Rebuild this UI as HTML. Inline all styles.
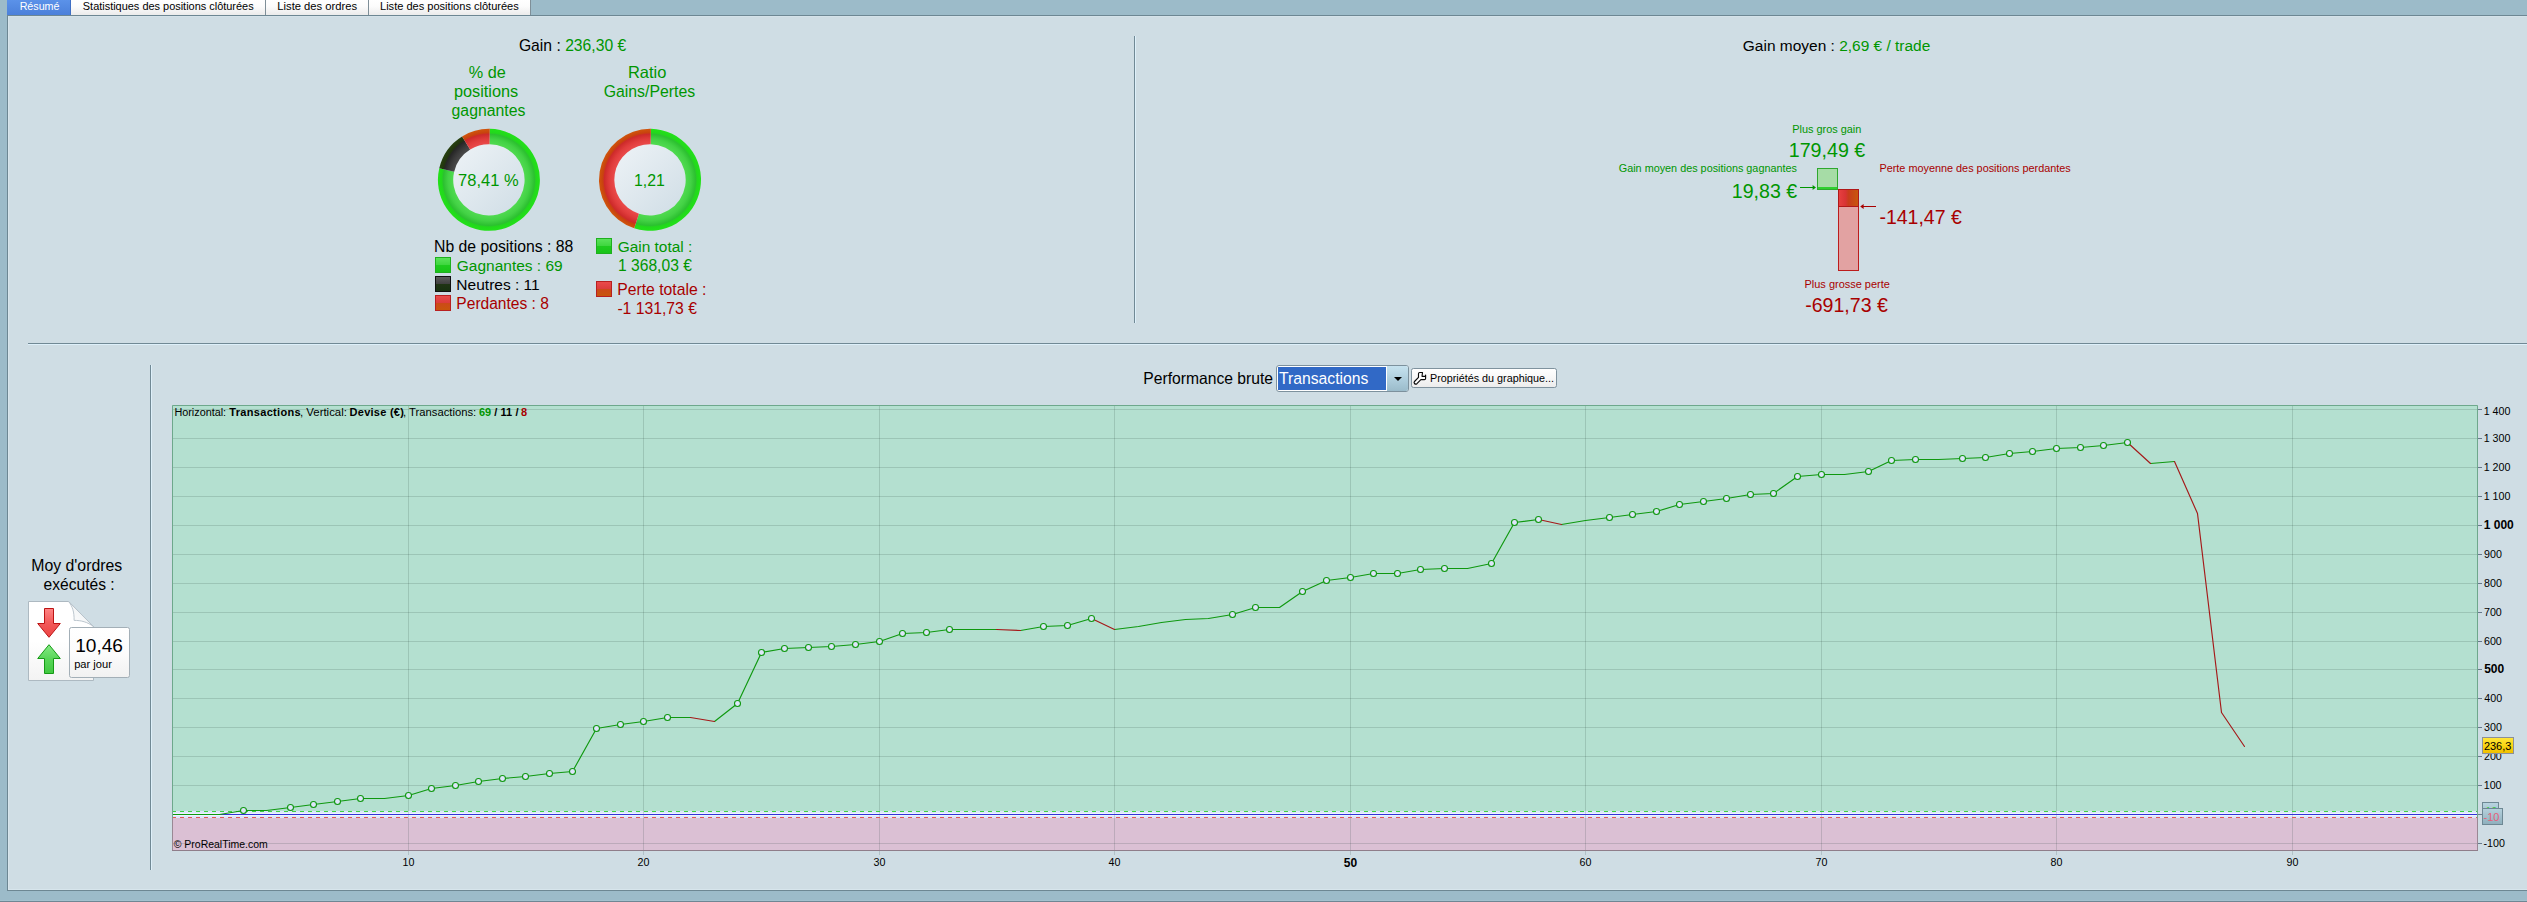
<!DOCTYPE html>
<html lang="fr"><head><meta charset="utf-8"><title>Résumé</title>
<style>
html,body{margin:0;padding:0}
body{width:2527px;height:902px;overflow:hidden;position:relative;background:#9cbbc9;font-family:"Liberation Sans",sans-serif}
#panel{position:absolute;left:7px;top:15px;width:2520px;height:876px;background:#cfdde4;border-left:1px solid #6d8793;border-top:1px solid #6d8793;border-bottom:1px solid #6d8793;box-sizing:border-box;box-shadow:inset 1px 0 0 #d7e5ec, inset 0 -1px 0 #d7e5ec, inset 0 1px 0 #d4e2e9}
#bottombar{position:absolute;left:0;top:900px;width:2527px;height:2px;background:linear-gradient(#a3c1ce 50%,#6f8794 50%)}
.t{position:absolute;white-space:nowrap;line-height:20px;height:20px}
.tab{position:absolute;top:0;height:15px;box-sizing:border-box;background:linear-gradient(#ffffff,#fbfbfb 45%,#ebebeb);border-right:1px solid #7f8f98}
.tab.sel{background:linear-gradient(#5b92e9,#4b80da);border-right:1px solid #3f6fc4}
.sq{position:absolute;width:16px;height:16px;box-sizing:border-box}
.sq.g{background:linear-gradient(#5ae25a,#3fd63f 48%,#1fcb1f 52%,#19c419);border:1px solid #1eb01e}
.sq.k{background:linear-gradient(#5a5a5a,#404040 48%,#1f3414 52%,#173010);border:1px solid #101010}
.sq.r{background:linear-gradient(#ea4a4a,#dc3c3c 48%,#cc4a18 52%,#c8560c);border:1px solid #b82020}
.vsep{position:absolute;width:1px;background:#718995;box-shadow:1px 0 0 #def0fa}
.hsep{position:absolute;height:1px;background:#718995;box-shadow:0 1px 0 #def0fa}
#combo{position:absolute;left:1276px;top:365px;width:133px;height:27px;box-sizing:border-box;border:1px solid #7d919d;border-radius:3px;background:#fff;overflow:hidden}
#csel{position:absolute;left:1px;top:1px;width:108px;height:23px;background:#3169c6}
#cbtn{position:absolute;left:110px;top:0;width:21px;height:25px;background:linear-gradient(#c6e2ef,#b0cfde 50%,#9bbccb)}
#cbtn:after{content:"";position:absolute;left:7px;top:11px;border-left:4px solid transparent;border-right:4px solid transparent;border-top:4.5px solid #000}
#pbtn{position:absolute;left:1411px;top:368px;width:146px;height:20px;box-sizing:border-box;border:1px solid #7f929e;border-radius:2.5px;background:linear-gradient(#ffffff,#f8f8f8 45%,#ececec)}
#ybox{position:absolute;left:2482px;top:737px;width:32px;height:17px;box-sizing:border-box;border:1px solid #8b9099;background:linear-gradient(#ffe63a,#fad512 50%,#f0c000)}
#box1{position:absolute;left:2482px;top:808px;width:21px;height:17px;box-sizing:border-box;border:1px solid #6e8894;background:linear-gradient(#b4d0dc,#8fb0bd)}
#box2{position:absolute;left:2482px;top:802px;width:17px;height:10px;box-sizing:border-box;border:1px solid #6e8894;background:linear-gradient(#b8d4e0,#a6c4d0)}

</style></head>
<body>
<div id="panel"></div>
<div class="tab sel" style="left:7px;width:64px"></div>
<div class="tab" style="left:71px;width:195px"></div>
<div class="tab" style="left:266px;width:103px"></div>
<div class="tab" style="left:369px;width:162px"></div>
<span class="t" style="left:19.64px;top:-3.81px;font-size:10.71px;color:#fff;">Résumé</span>
<span class="t" style="left:82.81px;top:-3.81px;font-size:10.95px;color:#000000;">Statistiques des positions clôturées</span>
<span class="t" style="left:277.30px;top:-3.82px;font-size:11.23px;color:#000000;">Liste des ordres</span>
<span class="t" style="left:380.02px;top:-3.80px;font-size:11.06px;color:#000000;">Liste des positions clôturées</span>
<span class="t" style="left:518.92px;top:36.21px;font-size:15.69px;color:#000000;">Gain : <span style="color:#009600">236,30 €</span></span>
<span class="t" style="left:468.73px;top:62.21px;font-size:16.24px;color:#009600;">% de</span>
<span class="t" style="left:453.94px;top:81.21px;font-size:16.31px;color:#009600;">positions</span>
<span class="t" style="left:451.57px;top:101.21px;font-size:15.80px;color:#009600;">gagnantes</span>
<span class="t" style="left:627.88px;top:62.21px;font-size:16.48px;color:#009600;">Ratio</span>
<span class="t" style="left:603.71px;top:82.20px;font-size:15.82px;color:#009600;">Gains/Pertes</span>
<svg id="donuts" width="300" height="120" viewBox="425 120 300 120" style="position:absolute;left:425px;top:120px">
<defs>
<radialGradient id="gG" gradientUnits="userSpaceOnUse" cx="0" cy="0" r="51"><stop offset="0.70" stop-color="#50da50"/><stop offset="0.80" stop-color="#43d245"/><stop offset="0.895" stop-color="#2cc030"/><stop offset="0.925" stop-color="#22d81c"/><stop offset="1" stop-color="#23e119"/></radialGradient>
<radialGradient id="gR" gradientUnits="userSpaceOnUse" cx="0" cy="0" r="51"><stop offset="0.70" stop-color="#ea4a4a"/><stop offset="0.80" stop-color="#e03c3c"/><stop offset="0.895" stop-color="#cd2a2a"/><stop offset="0.925" stop-color="#c8420e"/><stop offset="1" stop-color="#d0560c"/></radialGradient>
<radialGradient id="gK" gradientUnits="userSpaceOnUse" cx="0" cy="0" r="51"><stop offset="0.70" stop-color="#4a4a4a"/><stop offset="0.80" stop-color="#3a3a3a"/><stop offset="0.895" stop-color="#262626"/><stop offset="0.925" stop-color="#22340f"/><stop offset="1" stop-color="#26400f"/></radialGradient>
<linearGradient id="gI" x1="0" y1="0" x2="1" y2="1"><stop offset="0.1" stop-color="#ebf1f5"/><stop offset="0.9" stop-color="#d2dfe7"/></linearGradient>
</defs>
<g transform="translate(488.90 179.85) rotate(1)"><circle cx="0" cy="0" r="36.2" fill="url(#gI)"/><path d="M0.00 -51.00 A51.00 51.00 0 1 1 -49.83 -10.84 L-34.88 -7.59 A35.70 35.70 0 1 0 0.00 -35.70 Z" fill="url(#gG)"/><path d="M-49.83 -10.84 A51.00 51.00 0 0 1 -27.57 -42.91 L-19.30 -30.03 A35.70 35.70 0 0 0 -34.88 -7.59 Z" fill="url(#gK)"/><path d="M-27.57 -42.91 A51.00 51.00 0 0 1 -0.00 -51.00 L-0.00 -35.70 A35.70 35.70 0 0 0 -19.30 -30.03 Z" fill="url(#gR)"/></g>
<g transform="translate(650.00 179.85) rotate(1)"><circle cx="0" cy="0" r="36.2" fill="url(#gI)"/><path d="M0.00 -51.00 A51.00 51.00 0 1 1 -14.92 48.77 L-10.45 34.14 A35.70 35.70 0 1 0 0.00 -35.70 Z" fill="url(#gG)"/><path d="M-14.92 48.77 A51.00 51.00 0 0 1 -0.00 -51.00 L-0.00 -35.70 A35.70 35.70 0 0 0 -10.45 34.14 Z" fill="url(#gR)"/></g>
</svg>
<span class="t" style="left:458.07px;top:170.21px;font-size:16.51px;color:#009600;">78,41 %</span>
<span class="t" style="left:634.01px;top:171.21px;font-size:15.84px;color:#009600;">1,21</span>
<span class="t" style="left:434.04px;top:237.21px;font-size:15.75px;color:#000000;">Nb de positions : 88</span>
<div class="sq g" style="left:435px;top:257px"></div>
<span class="t" style="left:456.83px;top:256.21px;font-size:15.47px;color:#009600;">Gagnantes : 69</span>
<div class="sq k" style="left:435px;top:276px"></div>
<span class="t" style="left:456.36px;top:275.21px;font-size:15.52px;color:#000000;">Neutres : 11</span>
<div class="sq r" style="left:435px;top:295px"></div>
<span class="t" style="left:456.35px;top:294.21px;font-size:15.57px;color:#a80000;">Perdantes : 8</span>
<div class="sq g" style="left:596px;top:238px"></div>
<span class="t" style="left:617.63px;top:237.21px;font-size:15.45px;color:#009600;">Gain total :</span>
<span class="t" style="left:618.03px;top:256.20px;font-size:15.64px;color:#009600;">1 368,03 €</span>
<div class="sq r" style="left:596px;top:281px"></div>
<span class="t" style="left:617.14px;top:280.21px;font-size:15.75px;color:#a80000;">Perte totale :</span>
<span class="t" style="left:617.39px;top:299.20px;font-size:15.72px;color:#a80000;">-1 131,73 €</span>
<div class="vsep" style="left:1134px;top:36px;height:287px"></div>
<div class="hsep" style="left:28px;top:343px;width:2499px"></div>
<div class="vsep" style="left:150px;top:365px;height:505px"></div>
<span class="t" style="left:1742.83px;top:36.21px;font-size:15.48px;color:#000000;">Gain moyen : <span style="color:#009600">2,69 € / trade</span></span>
<span class="t" style="left:1792.23px;top:119.20px;font-size:10.92px;color:#009600;">Plus gros gain</span>
<span class="t" style="left:1788.73px;top:140.20px;font-size:19.66px;color:#009600;">179,49 €</span>
<span class="t" style="left:1618.76px;top:158.20px;font-size:10.83px;color:#009600;">Gain moyen des positions gagnantes</span>
<span class="t" style="left:1731.83px;top:181.21px;font-size:19.60px;color:#009600;">19,83 €</span>
<span class="t" style="left:1879.43px;top:158.21px;font-size:10.86px;color:#a80000;">Perte moyenne des positions perdantes</span>
<span class="t" style="left:1879.42px;top:207.21px;font-size:19.50px;color:#a80000;">-141,47 €</span>
<span class="t" style="left:1804.52px;top:274.21px;font-size:10.98px;color:#a80000;">Plus grosse perte</span>
<span class="t" style="left:1805.22px;top:295.20px;font-size:19.57px;color:#a80000;">-691,73 €</span>
<svg width="90" height="120" viewBox="1800 160 90 120" style="position:absolute;left:1800px;top:160px">
<defs><linearGradient id="rb" x1="0" y1="0" x2="1" y2="0"><stop offset="0" stop-color="#e84040"/><stop offset="0.35" stop-color="#d83434"/><stop offset="0.5" stop-color="#c83c1c"/><stop offset="1" stop-color="#c8580c"/></linearGradient></defs>
<rect x="1817.5" y="168.5" width="20" height="21" fill="#a6dca6" stroke="#2ea82e" stroke-width="1"/>
<rect x="1818" y="187" width="19" height="2" fill="#2fd02f"/>
<rect x="1838.5" y="206.5" width="20" height="64" fill="#e2a2a2" stroke="#bc1c1c" stroke-width="1"/>
<rect x="1838.5" y="189.5" width="20" height="17" fill="url(#rb)" stroke="#b01818" stroke-width="1"/>
<path d="M1800 187.5 H1814" stroke="#009600" stroke-width="1" fill="none"/><path d="M1812.6 185 L1816 187.5 L1812.6 190 Z" fill="#009600"/>
<path d="M1876 206.5 H1862" stroke="#a80000" stroke-width="1" fill="none"/><path d="M1863.6 204 L1860.2 206.5 L1863.6 209 Z" fill="#a80000"/>
</svg>
<span class="t" style="left:31.23px;top:556.20px;font-size:15.83px;color:#000000;">Moy d'ordres</span>
<span class="t" style="left:43.58px;top:575.21px;font-size:15.60px;color:#000000;">exécutés :</span>
<svg width="110" height="90" viewBox="25 598 110 90" style="position:absolute;left:25px;top:598px">
<defs>
<linearGradient id="doc" x1="0" y1="0" x2="0" y2="1"><stop offset="0" stop-color="#ffffff"/><stop offset="0.5" stop-color="#ffffff"/><stop offset="1" stop-color="#f3f3f3"/></linearGradient>
<linearGradient id="fold" x1="0" y1="1" x2="1" y2="0"><stop offset="0" stop-color="#ffffff"/><stop offset="0.5" stop-color="#f4f6f7"/><stop offset="1" stop-color="#dfe5e9"/></linearGradient>
<linearGradient id="ar" x1="0" y1="0" x2="0" y2="1"><stop offset="0" stop-color="#ff8484"/><stop offset="0.5" stop-color="#f25a5a"/><stop offset="1" stop-color="#ec4444"/></linearGradient>
<linearGradient id="ag" x1="0" y1="0" x2="0" y2="1"><stop offset="0" stop-color="#84ea84"/><stop offset="0.5" stop-color="#58d658"/><stop offset="1" stop-color="#40c840"/></linearGradient>
<linearGradient id="nb" x1="0" y1="0" x2="0" y2="1"><stop offset="0" stop-color="#ffffff"/><stop offset="0.5" stop-color="#fcfcfc"/><stop offset="1" stop-color="#f1f1f1"/></linearGradient>
</defs>
<path d="M28.5 601.5 H68.6 L93.5 626.6 V680.5 H28.5 Z" fill="url(#doc)" stroke="#adb9c1" stroke-width="1"/>
<path d="M68.6 601.5 C72.5 606.5 74.3 612 74.1 620.4 C81 620.3 87.5 622 93.5 626.6 Z" fill="url(#fold)" stroke="#b4c0c8" stroke-width="0.9"/>
<path d="M44.5 608.5 H53.5 V623.5 H60.3 L49 637.3 L37.7 623.5 H44.5 Z" fill="url(#ar)" stroke="#bc1414" stroke-width="1" stroke-linejoin="round"/>
<path d="M44.5 673.5 H53.5 V658.5 H60.3 L49 644.7 L37.7 658.5 H44.5 Z" fill="url(#ag)" stroke="#169a16" stroke-width="1" stroke-linejoin="round"/>
<rect x="69.5" y="627.5" width="60" height="50" rx="2" fill="url(#nb)" stroke="#a3afb7" stroke-width="1"/>
</svg>
<span class="t" style="left:75.17px;top:636.21px;font-size:19.12px;color:#000000;">10,46</span>
<span class="t" style="left:74.18px;top:654.22px;font-size:11.13px;color:#000000;">par jour</span>
<span class="t" style="left:1143.35px;top:369.21px;font-size:15.67px;color:#000000;">Performance brute</span>
<div id="combo"><div id="csel"></div><div id="cbtn"></div></div>
<span class="t" style="left:1278.89px;top:369.20px;font-size:15.74px;color:#fff;">Transactions</span>
<div id="pbtn"></div>
<svg width="16" height="16" viewBox="1412 370 16 16" style="position:absolute;left:1412px;top:370px">
<path d="M1414.5 381.5 L1418.5 377.3 L1418.5 373.7 Q1418.5 372.5 1419.7 372.5 L1422.5 372.5 L1422 376.3 L1425.5 376.3 L1425.6 375.1 L1425.6 378.5 Q1425.6 379.6 1424.4 379.6 L1420.9 379.6 L1416.9 383.7 Q1415.6 384.7 1414.5 383.5 Q1413.6 382.5 1414.5 381.5 Z" fill="#fff" stroke="#0a0a0a" stroke-width="1.15" stroke-linejoin="round"/>
</svg>
<span class="t" style="left:1429.94px;top:368.21px;font-size:10.79px;color:#000000;">Propriétés du graphique...</span>
<svg id="chart" width="2367" height="490" viewBox="160 398 2367 490" style="position:absolute;left:160px;top:398px">
<rect x="172" y="405" width="2306" height="446" fill="#b4e0d0"/>
<rect x="172" y="818" width="2306" height="33" fill="#dbc0d4"/>
<rect x="172" y="811" width="2306" height="7" fill="#dde6fb"/><rect x="172" y="813" width="2306" height="3" fill="#ebf3fe"/>
<path d="M173 843.5 H2477 M173 814.5 H2477 M173 785.5 H2477 M173 756.5 H2477 M173 727.5 H2477 M173 698.5 H2477 M173 669.5 H2477 M173 641.5 H2477 M173 612.5 H2477 M173 583.5 H2477 M173 554.5 H2477 M173 525.5 H2477 M173 496.5 H2477 M173 467.5 H2477 M173 438.5 H2477 M173 409.5 H2477 M408.5 406 V855 M643.5 406 V855 M879.5 406 V855 M1114.5 406 V855 M1350.5 406 V855 M1585.5 406 V855 M1821.5 406 V855 M2056.5 406 V855 M2292.5 406 V855" stroke="#203830" stroke-opacity="0.16" stroke-width="1" fill="none"/>
<path d="M2478 843.5 H2482 M2478 814.5 H2482 M2478 785.5 H2482 M2478 756.5 H2482 M2478 727.5 H2482 M2478 698.5 H2482 M2478 669.5 H2482 M2478 641.5 H2482 M2478 612.5 H2482 M2478 583.5 H2482 M2478 554.5 H2482 M2478 525.5 H2482 M2478 496.5 H2482 M2478 467.5 H2482 M2478 438.5 H2482 M2478 409.5 H2482" stroke="#66788a" stroke-width="1" fill="none"/>
<path d="M172 811.5 H2477" stroke="#3fd043" stroke-width="1" stroke-dasharray="4 4" fill="none"/>
<path d="M172 817.5 H2477" stroke="#e05858" stroke-width="1" stroke-dasharray="4 4" fill="none"/>
<path d="M173 814.5 H2477" stroke="#3432d6" stroke-width="1" fill="none"/>
<path d="M172.5 814.5 L196.5 814.5 M196.5 814.5 L219.5 814.5 M219.5 814.5 L243.5 810.5 M243.5 810.5 L266.5 810.5 M266.5 810.5 L290.5 807.5 M290.5 807.5 L313.5 804.5 M313.5 804.5 L337.5 801.5 M337.5 801.5 L360.5 798.5 M360.5 798.5 L384.5 798.5 M384.5 798.5 L408.5 795.5 M408.5 795.5 L431.5 788.5 M431.5 788.5 L455.5 785.5 M455.5 785.5 L478.5 781.5 M478.5 781.5 L502.5 778.5 M502.5 778.5 L525.5 776.5 M525.5 776.5 L549.5 773.5 M549.5 773.5 L572.5 771.5 M572.5 771.5 L596.5 728.5 M596.5 728.5 L620.5 724.5 M620.5 724.5 L643.5 721.5 M643.5 721.5 L667.5 717.5 M667.5 717.5 L690.5 717.5 M714.5 721.5 L737.5 703.5 M737.5 703.5 L761.5 652.5 M761.5 652.5 L784.5 648.5 M784.5 648.5 L808.5 647.5 M808.5 647.5 L831.5 646.5 M831.5 646.5 L855.5 644.5 M855.5 644.5 L879.5 641.5 M879.5 641.5 L902.5 633.5 M902.5 633.5 L926.5 632.5 M926.5 632.5 L949.5 629.5 M949.5 629.5 L973.5 629.5 M973.5 629.5 L996.5 629.5 M1020.5 630.5 L1043.5 626.5 M1043.5 626.5 L1067.5 625.5 M1067.5 625.5 L1091.5 618.5 M1114.5 629.5 L1138.5 626.5 M1138.5 626.5 L1161.5 622.5 M1161.5 622.5 L1185.5 619.5 M1185.5 619.5 L1208.5 618.5 M1208.5 618.5 L1232.5 614.5 M1232.5 614.5 L1255.5 607.5 M1255.5 607.5 L1279.5 607.5 M1279.5 607.5 L1302.5 591.5 M1302.5 591.5 L1326.5 580.5 M1326.5 580.5 L1350.5 577.5 M1350.5 577.5 L1373.5 573.5 M1373.5 573.5 L1397.5 573.5 M1397.5 573.5 L1420.5 569.5 M1420.5 569.5 L1444.5 568.5 M1444.5 568.5 L1467.5 568.5 M1467.5 568.5 L1491.5 563.5 M1491.5 563.5 L1514.5 522.5 M1514.5 522.5 L1538.5 519.5 M1561.5 524.5 L1585.5 520.5 M1585.5 520.5 L1609.5 517.5 M1609.5 517.5 L1632.5 514.5 M1632.5 514.5 L1656.5 511.5 M1656.5 511.5 L1679.5 504.5 M1679.5 504.5 L1703.5 501.5 M1703.5 501.5 L1726.5 498.5 M1726.5 498.5 L1750.5 494.5 M1750.5 494.5 L1773.5 493.5 M1773.5 493.5 L1797.5 476.5 M1797.5 476.5 L1821.5 474.5 M1821.5 474.5 L1844.5 474.5 M1844.5 474.5 L1868.5 471.5 M1868.5 471.5 L1891.5 460.5 M1891.5 460.5 L1915.5 459.5 M1915.5 459.5 L1938.5 459.5 M1938.5 459.5 L1962.5 458.5 M1962.5 458.5 L1985.5 457.5 M1985.5 457.5 L2009.5 453.5 M2009.5 453.5 L2032.5 451.5 M2032.5 451.5 L2056.5 448.5 M2056.5 448.5 L2080.5 447.5 M2080.5 447.5 L2103.5 445.5 M2103.5 445.5 L2127.5 442.5 M2150.5 463.5 L2174.5 461.5" stroke="#0f980f" stroke-width="1.15" fill="none" stroke-linecap="round"/>
<path d="M690.5 717.5 L714.5 721.5 M996.5 629.5 L1020.5 630.5 M1091.5 618.5 L1114.5 629.5 M1538.5 519.5 L1561.5 524.5 M2127.5 442.5 L2150.5 463.5 M2174.5 461.5 L2197.5 513.5 M2197.5 513.5 L2221.5 712.5 M2221.5 712.5 L2244.5 746.5" stroke="#a51818" stroke-width="1.15" fill="none" stroke-linecap="round"/>
<g fill="#dfe5fb" stroke="#0f980f" stroke-width="1.1"><circle cx="243.5" cy="810.5" r="3"/><circle cx="290.5" cy="807.5" r="3"/><circle cx="313.5" cy="804.5" r="3"/><circle cx="337.5" cy="801.5" r="3"/><circle cx="360.5" cy="798.5" r="3"/><circle cx="408.5" cy="795.5" r="3"/><circle cx="431.5" cy="788.5" r="3"/><circle cx="455.5" cy="785.5" r="3"/><circle cx="478.5" cy="781.5" r="3"/><circle cx="502.5" cy="778.5" r="3"/><circle cx="525.5" cy="776.5" r="3"/><circle cx="549.5" cy="773.5" r="3"/><circle cx="572.5" cy="771.5" r="3"/><circle cx="596.5" cy="728.5" r="3"/><circle cx="620.5" cy="724.5" r="3"/><circle cx="643.5" cy="721.5" r="3"/><circle cx="667.5" cy="717.5" r="3"/><circle cx="737.5" cy="703.5" r="3"/><circle cx="761.5" cy="652.5" r="3"/><circle cx="784.5" cy="648.5" r="3"/><circle cx="808.5" cy="647.5" r="3"/><circle cx="831.5" cy="646.5" r="3"/><circle cx="855.5" cy="644.5" r="3"/><circle cx="879.5" cy="641.5" r="3"/><circle cx="902.5" cy="633.5" r="3"/><circle cx="926.5" cy="632.5" r="3"/><circle cx="949.5" cy="629.5" r="3"/><circle cx="1043.5" cy="626.5" r="3"/><circle cx="1067.5" cy="625.5" r="3"/><circle cx="1091.5" cy="618.5" r="3"/><circle cx="1232.5" cy="614.5" r="3"/><circle cx="1255.5" cy="607.5" r="3"/><circle cx="1302.5" cy="591.5" r="3"/><circle cx="1326.5" cy="580.5" r="3"/><circle cx="1350.5" cy="577.5" r="3"/><circle cx="1373.5" cy="573.5" r="3"/><circle cx="1397.5" cy="573.5" r="3"/><circle cx="1420.5" cy="569.5" r="3"/><circle cx="1444.5" cy="568.5" r="3"/><circle cx="1491.5" cy="563.5" r="3"/><circle cx="1514.5" cy="522.5" r="3"/><circle cx="1538.5" cy="519.5" r="3"/><circle cx="1609.5" cy="517.5" r="3"/><circle cx="1632.5" cy="514.5" r="3"/><circle cx="1656.5" cy="511.5" r="3"/><circle cx="1679.5" cy="504.5" r="3"/><circle cx="1703.5" cy="501.5" r="3"/><circle cx="1726.5" cy="498.5" r="3"/><circle cx="1750.5" cy="494.5" r="3"/><circle cx="1773.5" cy="493.5" r="3"/><circle cx="1797.5" cy="476.5" r="3"/><circle cx="1821.5" cy="474.5" r="3"/><circle cx="1868.5" cy="471.5" r="3"/><circle cx="1891.5" cy="460.5" r="3"/><circle cx="1915.5" cy="459.5" r="3"/><circle cx="1962.5" cy="458.5" r="3"/><circle cx="1985.5" cy="457.5" r="3"/><circle cx="2009.5" cy="453.5" r="3"/><circle cx="2032.5" cy="451.5" r="3"/><circle cx="2056.5" cy="448.5" r="3"/><circle cx="2080.5" cy="447.5" r="3"/><circle cx="2103.5" cy="445.5" r="3"/><circle cx="2127.5" cy="442.5" r="3"/></g>
<path d="M172.5 818 V405.5 H2477.5 V818" stroke="#6ea88c" stroke-width="1" fill="none"/>
<path d="M172.5 818 V851 M2477.5 818 V851" stroke="#9a8894" stroke-width="1" fill="none"/>
<path d="M172 850.5 H2478" stroke="#8f7d8a" stroke-width="1" fill="none"/>
</svg>
<span class="t" style="left:2483.52px;top:833.21px;font-size:10.70px;color:#000000;">-100</span>
<span class="t" style="left:2484.07px;top:804.21px;font-size:10.70px;color:#000000;">0</span>
<span class="t" style="left:2483.70px;top:775.21px;font-size:10.70px;color:#000000;">100</span>
<span class="t" style="left:2483.97px;top:746.21px;font-size:10.70px;color:#000000;">200</span>
<span class="t" style="left:2484.07px;top:717.21px;font-size:10.70px;color:#000000;">300</span>
<span class="t" style="left:2484.29px;top:688.21px;font-size:10.70px;color:#000000;">400</span>
<span class="t" style="left:2484.14px;top:659.21px;font-size:12.00px;color:#000000;font-weight:bold;">500</span>
<span class="t" style="left:2483.97px;top:631.21px;font-size:10.70px;color:#000000;">600</span>
<span class="t" style="left:2483.97px;top:602.21px;font-size:10.70px;color:#000000;">700</span>
<span class="t" style="left:2484.07px;top:573.21px;font-size:10.70px;color:#000000;">800</span>
<span class="t" style="left:2484.02px;top:544.21px;font-size:10.70px;color:#000000;">900</span>
<span class="t" style="left:2483.78px;top:515.21px;font-size:12.00px;color:#000000;font-weight:bold;">1 000</span>
<span class="t" style="left:2483.70px;top:486.21px;font-size:10.70px;color:#000000;">1 100</span>
<span class="t" style="left:2483.70px;top:457.21px;font-size:10.70px;color:#000000;">1 200</span>
<span class="t" style="left:2483.70px;top:428.21px;font-size:10.70px;color:#000000;">1 300</span>
<span class="t" style="left:2483.70px;top:401.21px;font-size:10.70px;color:#000000;">1 400</span>
<span class="t" style="left:402.55px;top:852.21px;font-size:10.70px;color:#000000;">10</span>
<span class="t" style="left:637.55px;top:852.21px;font-size:10.70px;color:#000000;">20</span>
<span class="t" style="left:873.55px;top:852.21px;font-size:10.70px;color:#000000;">30</span>
<span class="t" style="left:1108.55px;top:852.21px;font-size:10.70px;color:#000000;">40</span>
<span class="t" style="left:1343.83px;top:853.21px;font-size:12.00px;color:#000000;font-weight:bold;">50</span>
<span class="t" style="left:1579.55px;top:852.21px;font-size:10.70px;color:#000000;">60</span>
<span class="t" style="left:1815.55px;top:852.21px;font-size:10.70px;color:#000000;">70</span>
<span class="t" style="left:2050.55px;top:852.21px;font-size:10.70px;color:#000000;">80</span>
<span class="t" style="left:2286.55px;top:852.21px;font-size:10.70px;color:#000000;">90</span>
<span class="t" style="left:174.43px;top:402.20px;font-size:10.82px;color:#000000;">Horizontal:</span>
<span class="t" style="left:229.19px;top:402.20px;font-size:11.00px;color:#000000;font-weight:bold;letter-spacing:0.335px;">Transactions</span>
<span class="t" style="left:299.97px;top:402.20px;font-size:11.41px;color:#000000;">, Vertical:</span>
<span class="t" style="left:349.59px;top:402.20px;font-size:11.00px;color:#000000;font-weight:bold;letter-spacing:0.254px;">Devise (€)</span>
<span class="t" style="left:403.09px;top:402.21px;font-size:11.24px;color:#000000;">, Transactions:</span>
<span class="t" style="left:478.92px;top:402.20px;font-size:11.00px;color:#009600;font-weight:bold;letter-spacing:-0.140px;">69</span>
<span class="t" style="left:494.19px;top:402.20px;font-size:11.00px;color:#000000;font-weight:bold;letter-spacing:0.090px;">/ 11 /</span>
<span class="t" style="left:520.97px;top:402.20px;font-size:11.00px;color:#a80000;font-weight:bold;">8</span>
<span class="t" style="left:173.74px;top:835.21px;font-size:10.47px;color:#000000;">© ProRealTime.com</span>
<div id="ybox"></div>
<span class="t" style="left:2483.95px;top:736.21px;font-size:10.95px;color:#000000;">236,3</span>
<div id="box2"></div>
<span class="t" style="left:2485.20px;top:801.21px;font-size:10.70px;color:#3cc83c;">10</span>
<div id="box1"></div>
<span class="t" style="left:2483.51px;top:807.20px;font-size:10.99px;color:#e6607a;">-10</span>
<div id="bottombar"></div>
</body></html>
